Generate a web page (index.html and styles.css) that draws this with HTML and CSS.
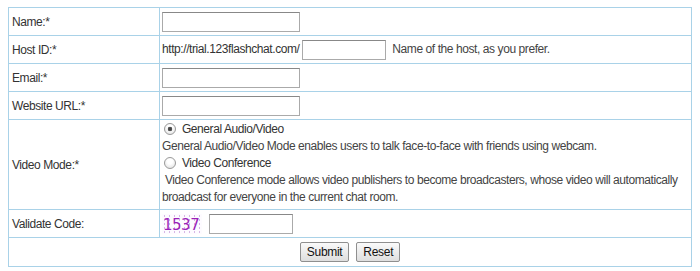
FILE: index.html
```html
<!DOCTYPE html>
<html lang="en">
<head>
    <meta charset="UTF-8">
    <title>Create Chat Room</title>
    <link rel="stylesheet" href="styles.css">
</head>
<body>
    <form class="signup">
        <table class="form-table">
            <tr>
                <td class="label">Name:*</td>
                <td><input type="text" class="field"></td>
            </tr>
            <tr>
                <td class="label">Host ID:*</td>
                <td>
                    <span class="prefix">http://trial.123flashchat.com/</span>
                    <input type="text" class="field short">
                    <span class="hint">Name of the host, as you prefer.</span>
                </td>
            </tr>
            <tr>
                <td class="label">Email:*</td>
                <td><input type="text" class="field"></td>
            </tr>
            <tr>
                <td class="label">Website URL:*</td>
                <td><input type="text" class="field"></td>
            </tr>
            <tr>
                <td class="label">Video Mode:*</td>
                <td class="modes">
                    <label class="mode"><input type="radio" name="mode" checked> General Audio/Video</label>
                    <p class="desc">General Audio/Video Mode enables users to talk face-to-face with friends using webcam.</p>
                    <label class="mode"><input type="radio" name="mode"> Video Conference</label>
                    <p class="desc">&nbsp;Video Conference mode allows video publishers to become broadcasters, whose video will automatically broadcast for everyone in the current chat room.</p>
                </td>
            </tr>
            <tr>
                <td class="label">Validate Code:</td>
                <td>
                    <span class="captcha">1537</span>
                    <input type="text" class="field short">
                </td>
            </tr>
            <tr>
                <td colspan="2" class="actions">
                    <button type="button">Submit</button>
                    <button type="reset">Reset</button>
                </td>
            </tr>
        </table>
    </form>
</body>
</html>
```

FILE: styles.css
```css
body {
    margin: 7px 8px;
    background: #fff;
    font-family: 'Liberation Sans', Arial, sans-serif;
    font-size: 12px;
    letter-spacing: -0.42px;
    color: #333;
}

.form-table {
    width: 100%;
    border-collapse: collapse;
    border: 1px solid #a9d2e8;
}

.form-table td {
    border: 1px solid #a9d2e8;
    padding: 3px 2px;
    height: 21px;
    vertical-align: middle;
}

.form-table td.label {
    width: 145px;
    padding-left: 3px;
}

.field {
    width: 132px;
    height: 14px;
    margin: 0;
    padding: 2px;
    border: 1px solid #aaa;
    border-top-color: #888;
    font: 12px 'Liberation Sans', Arial, sans-serif;
    vertical-align: middle;
}

.field.short {
    width: 78px;
}

.hint {
    margin-left: 3px;
    color: #444;
}

/* Video mode */
.form-table td.modes {
    padding: 1px 2px 3px;
}

.mode {
    display: block;
    line-height: 17px;
}

.mode input {
    appearance: none;
    -webkit-appearance: none;
    width: 12px;
    height: 12px;
    margin: 0 3px 0 2px;
    border: 1px solid #9a9a9a;
    border-radius: 50%;
    background: radial-gradient(circle at 50% 35%, #fff 30%, #dcdcdc 100%);
    vertical-align: -2px;
}

.mode input:checked {
    background:
        radial-gradient(circle, #3a3a3a 0, #555 2px, transparent 2.6px),
        radial-gradient(circle at 50% 35%, #fff 30%, #dcdcdc 100%);
}

.desc {
    margin: 0;
    line-height: 17px;
    color: #444;
}

/* Captcha */
.captcha {
    display: inline-block;
    width: 40px;
    height: 20px;
    margin-right: 4px;
    padding-left: 1px;
    box-sizing: border-box;
    font: 15px 'DejaVu Sans', sans-serif;
    line-height: 22px;
    color: #9b1fb8;
    letter-spacing: -0.5px;
    vertical-align: middle;
    background:
        radial-gradient(circle, #d7b6e6 0.6px, transparent 1px) 0 0 / 5px 4px,
        #fdfbff;
}

.form-table td.actions {
    height: 22px;
    padding: 3px 2px;
    text-align: center;
}

button {
    font: 12px 'Liberation Sans', Arial, sans-serif;
    letter-spacing: -0.3px;
    color: #111;
    padding: 2px 6px;
    height: 20px;
    margin: 0 2px;
    border: 1px solid #8f8f8f;
    border-radius: 2px;
    background: linear-gradient(#fafafa, #dedede);
}
```
